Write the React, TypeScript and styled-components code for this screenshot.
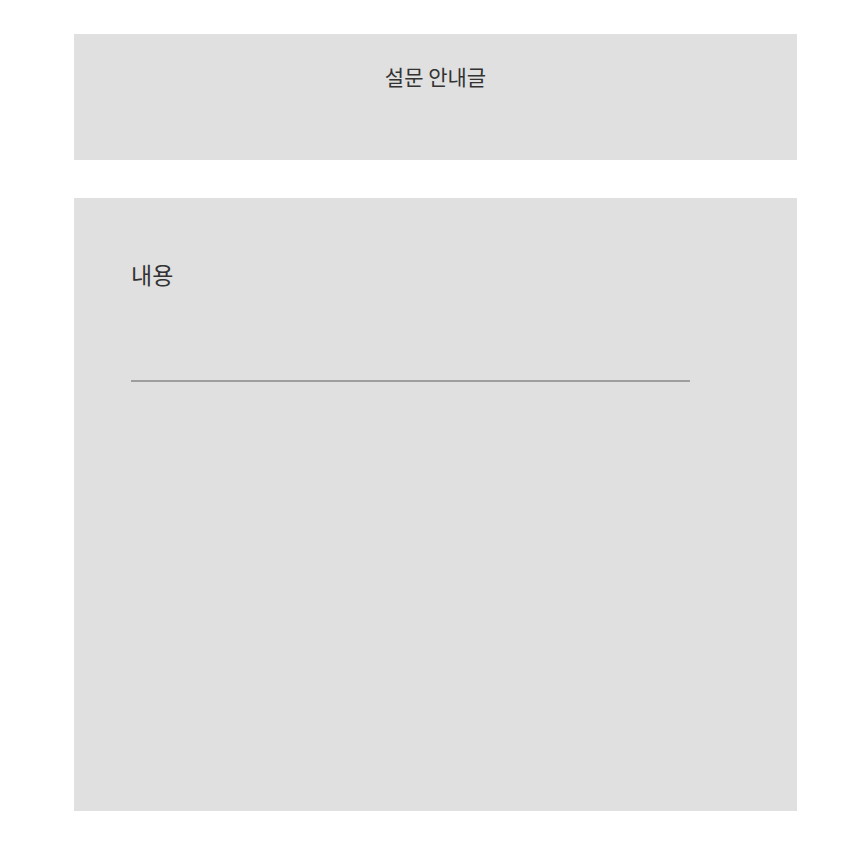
import React from "react";
import styled, { createGlobalStyle } from "styled-components";

const Global = createGlobalStyle`
  html, body { margin: 0; padding: 0; background: #ffffff; }
  body { font-family: "Noto Sans CJK KR", "Noto Sans", sans-serif; color: #333333; }
`;

const Page = styled.div`
  display: flex;
  flex-direction: column;
  gap: 38px;
  padding: 34px 62px 0 74px;
`;

const Header = styled.section`
  background: #e0e0e0;
  height: 126px;
  box-sizing: border-box;
  padding-top: 18px;
  display: flex;
  justify-content: center;
  align-items: flex-start;
`;

const Title = styled.h1`
  margin: 0;
  font-size: 21px;
  font-weight: 400;
  line-height: 48px;
  color: #333333;
`;

const Body = styled.section`
  background: #e0e0e0;
  height: 613px;
  box-sizing: border-box;
  padding: 56px 0 0 57px;
  display: flex;
  flex-direction: column;
`;

const Label = styled.div`
  font-size: 23px;
  line-height: 40px;
  color: #333333;
`;

const InputLine = styled.div`
  width: 559px;
  height: 2px;
  margin-top: 86px;
  background: #9e9e9e;
`;

export default function App() {
  return (
    <>
      <Global />
      <Page>
        <Header>
          <Title>설문 안내글</Title>
        </Header>
        <Body>
          <Label>내용</Label>
          <InputLine />
        </Body>
      </Page>
    </>
  );
}
